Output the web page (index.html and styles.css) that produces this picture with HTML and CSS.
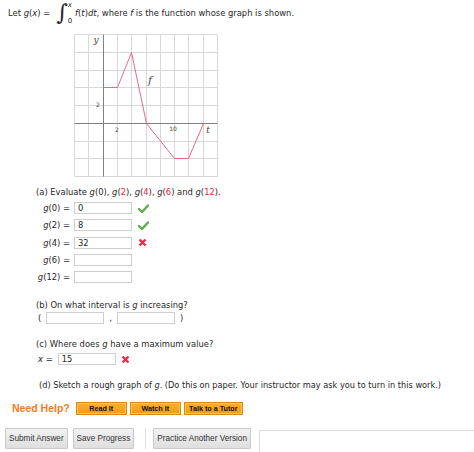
FILE: index.html
```html
<!DOCTYPE html>
<html lang="en">
<head>
    <meta charset="UTF-8">
    <title>Question</title>
    <link rel="stylesheet" href="styles.css">
</head>
<body>
    <div class="intro">
        <span>Let <i>g</i>(<i>x</i>) =</span>
        <span class="integral">
            <span class="int-sign">&#8747;</span>
            <span class="int-limits"><i>x</i><span>0</span></span>
        </span>
        <span><i>f</i>(<i>t</i>)<i>dt</i>, where <i>f</i> is the function whose graph is shown.</span>
    </div>

    <div class="graph">
        <svg width="146" height="145" viewBox="0 0 146 145">
            <path class="grid" d="M1.5 1.5V143.5M15.5 1.5V143.5M44.5 1.5V143.5M58.5 1.5V143.5M73.5 1.5V143.5M87.5 1.5V143.5M101.5 1.5V143.5M115.5 1.5V143.5M130.5 1.5V143.5M144.5 1.5V143.5"/>
            <path class="grid" d="M1.5 1.5H144.5M1.5 19.5H144.5M1.5 37.5H144.5M1.5 54.5H144.5M1.5 72.5H144.5M1.5 108.5H144.5M1.5 125.5H144.5M1.5 143.5H144.5"/>
            <path class="axis" d="M30.5 1.5V143.5M1.5 90.5H144.5"/>
            <path class="curve" d="M30.5 54.5L44.5 54.5L58.5 19.5L73.5 90.5L101.5 125.5L115.5 125.5L130.5 90.5"/>
            <text class="lbl-var" x="23" y="10">y</text>
            <text class="lbl-var lbl-f" x="77" y="51">f</text>
            <text class="lbl-var" x="135" y="100">t</text>
            <text class="lbl-num" x="25" y="74">2</text>
            <text class="lbl-num" x="44" y="99">2</text>
            <text class="lbl-num" x="100" y="97.5">10</text>
        </svg>
    </div>

    <div class="part part-a">
        <p class="q">(a) Evaluate <i>g</i>(0), <i>g</i>(<span class="hl">2</span>), <i>g</i>(<span class="hl">4</span>), <i>g</i>(<span class="hl">6</span>) and <i>g</i>(<span class="hl">12</span>).</p>
        <div class="rows">
            <span class="lbl"><i>g</i>(0) =</span>
            <span class="answer"><span class="box">0</span><span class="mark"><svg width="11" height="9" viewBox="0 0 11 9"><path d="M1 5L4 8L10 1.5" stroke="#5cae4c" stroke-width="2.4" fill="none" stroke-linecap="round"/></svg></span></span>
            <span class="lbl"><i>g</i>(2) =</span>
            <span class="answer"><span class="box">8</span><span class="mark"><svg width="11" height="9" viewBox="0 0 11 9"><path d="M1 5L4 8L10 1.5" stroke="#5cae4c" stroke-width="2.4" fill="none" stroke-linecap="round"/></svg></span></span>
            <span class="lbl"><i>g</i>(4) =</span>
            <span class="answer"><span class="box">32</span><span class="mark"><svg width="9" height="9" viewBox="0 0 9 9"><path d="M1.5 1.5L7.5 7.5M7.5 1.5L1.5 7.5" stroke="#e43145" stroke-width="2.4" fill="none"/></svg></span></span>
            <span class="lbl"><i>g</i>(6) =</span>
            <span class="answer"><span class="box"></span></span>
            <span class="lbl"><i>g</i>(12) =</span>
            <span class="answer"><span class="box"></span></span>
        </div>
    </div>

    <div class="part part-b">
        <p class="q">(b) On what interval is <i>g</i> increasing?</p>
        <div class="interval">
            <span>(</span><span class="box"></span><span>,</span><span class="box"></span><span>)</span>
        </div>
    </div>

    <div class="part part-c">
        <p class="q">(c) Where does <i>g</i> have a maximum value?</p>
        <div class="interval">
            <span><i>x</i> =</span><span class="box">15</span>
            <span class="mark"><svg width="9" height="9" viewBox="0 0 9 9"><path d="M1.5 1.5L7.5 7.5M7.5 1.5L1.5 7.5" stroke="#e43145" stroke-width="2.4" fill="none"/></svg></span>
        </div>
    </div>

    <p class="q part-d">(d) Sketch a rough graph of <i>g</i>. (Do this on paper. Your instructor may ask you to turn in this work.)</p>

    <div class="help">
        <span class="help-title">Need Help?</span>
        <button class="help-btn">Read It</button>
        <button class="help-btn">Watch It</button>
        <button class="help-btn wide">Talk to a Tutor</button>
    </div>

    <div class="actions">
        <button class="act-btn">Submit Answer</button>
        <button class="act-btn">Save Progress</button>
        <span class="divider"></span>
        <button class="act-btn">Practice Another Version</button>
        <div class="note-box"></div>
    </div>
</body>
</html>
```

FILE: styles.css
```css
body { margin: 0; background: #fff; color: #262626; font-family: "DejaVu Sans", Verdana, sans-serif; font-size: 8.4px; }
p { margin: 0; }
i { font-style: italic; }

.intro { display: flex; align-items: center; height: 26px; padding-left: 8px; gap: 3px; white-space: nowrap; }
.integral { display: inline-flex; height: 24px; margin-left: 3px; }
.int-sign { font-family: "DejaVu Serif", serif; font-size: 22px; line-height: 24px; font-weight: 300; }
.int-limits { display: flex; flex-direction: column; justify-content: space-between; font-size: 7px; line-height: 8px; }

.graph { margin: 7px 0 0 73px; height: 145px; }
.graph svg { display: block; }
.grid { stroke: #d8d8d8; stroke-width: 1; fill: none; }
.axis { stroke: #808080; stroke-width: 1; fill: none; }
.curve { stroke: #e66b85; stroke-width: 1; fill: none; }
.lbl-var { font-family: "DejaVu Serif", serif; font-style: italic; font-size: 9px; fill: #444; text-anchor: middle; }
.lbl-f { font-size: 11px; }
.lbl-num { font-family: "DejaVu Sans", sans-serif; font-size: 6px; fill: #444; text-anchor: middle; }

.part { margin-left: 36px; }
.q { height: 12px; line-height: 12px; white-space: nowrap; }
.hl { color: #e0283c; }
.part-a { margin-top: 8px; }
.rows { display: grid; grid-template-columns: 34px auto; grid-auto-rows: 12px; column-gap: 4px; row-gap: 5.3px; align-items: center; margin-top: 4px; }
.lbl { text-align: right; white-space: nowrap; }
.answer { display: flex; align-items: center; gap: 6px; }
.box { display: inline-block; box-sizing: border-box; width: 58px; height: 12px; border: 1px solid #cfcfcf; padding: 0 3px; line-height: 10px; background: #fff; }
.mark { display: inline-flex; }
.mark svg { display: block; }

.part-b { margin-top: 16px; }
.interval { display: flex; align-items: center; gap: 5px; height: 12px; padding-left: 2px; margin-top: 1px; }
.part-c { margin-top: 14px; }
.part-c .interval { margin-top: 3px; }

.part-d { margin: 14px 0 0 39px; font-size: 8.2px; }

.help { display: flex; align-items: center; gap: 3px; height: 14px; margin: 10px 0 0 12px; }
.help-title { font-family: "Liberation Sans", Arial, sans-serif; font-weight: bold; font-size: 10.5px; color: #f07c22; margin-right: 3px; }
.help-btn { width: 51px; height: 13px; padding: 0; border: 1px solid #d98a14; box-shadow: inset 0 0 0 1px #fcc45a; background: linear-gradient(#fbb02d, #f49a18); font-family: "Liberation Sans", Arial, sans-serif; font-weight: bold; font-size: 7.2px; color: #111; }
.help-btn.wide { width: 59px; }

.actions { display: flex; align-items: flex-start; margin: 13px 0 0 5px; }
.act-btn { height: 21px; padding: 0 3px; margin-right: 5px; border: 1px solid #c9c9c9; border-radius: 1px; background: linear-gradient(#f2f2f2, #dedede); font-family: "Liberation Sans", Arial, sans-serif; font-size: 8.2px; color: #333; }
.divider { width: 1px; height: 21px; margin: 0 7px 0 6px; background: #ddd; }
.note-box { flex: 1; height: 30px; margin: 2px 0 0 3px; border: 1px solid #ddd; border-right: none; }
```
